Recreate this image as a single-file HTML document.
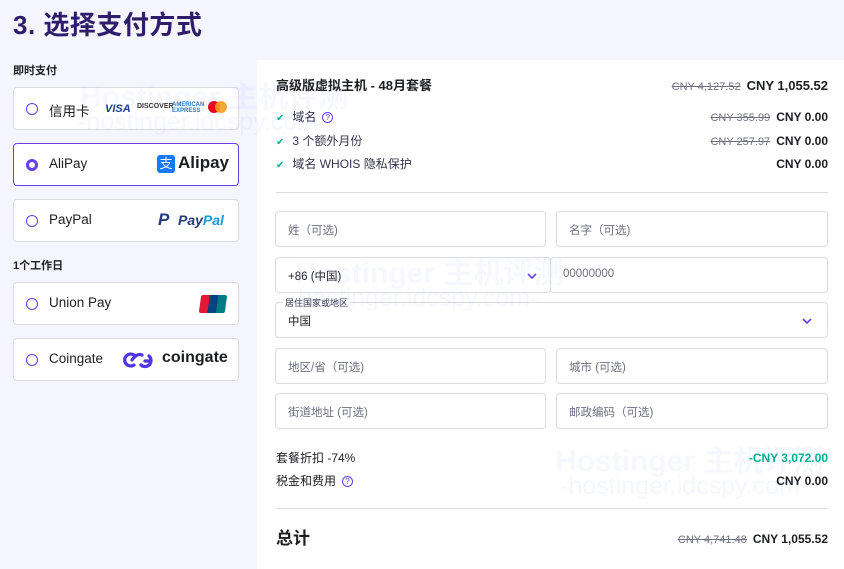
<!DOCTYPE html>
<html><head><meta charset="utf-8"><style>
*{margin:0;padding:0;box-sizing:border-box}
body{width:844px;height:569px;overflow:hidden;background:#f4f5ff;font-family:"Liberation Sans","Noto Sans CJK SC",sans-serif;color:#1d1e20;position:relative}
.a{position:absolute}
h1{position:absolute;left:13px;top:5px;font-size:26px;font-weight:bold;color:#2f1c6a;letter-spacing:0.5px}
.sec{position:absolute;left:13px;font-size:11px;font-weight:bold;color:#1d1e20}
.card{position:absolute;left:13px;width:226px;height:43px;background:#fff;border:1px solid #dadce0;border-radius:4px}
.card.sel{border-color:#673de6}
.rad{position:absolute;left:12px;top:15px;width:12px;height:12px;border:1.5px solid #673de6;border-radius:50%}
.sel .rad{border-width:3.5px}
.lbl{position:absolute;left:35px;top:12px;font-size:13.5px;color:#1d1e20}
.panel{position:absolute;left:257px;top:60px;width:587px;height:509px;background:#fff}
.r{position:absolute;right:16px;font-size:12px;font-weight:bold;text-align:right;line-height:16px}
.s{color:#6d7081;text-decoration:line-through;font-weight:normal;margin-right:6px;font-size:11px}
.row{position:absolute;left:19px;font-size:12px;color:#36344d;line-height:16px}
.ck{color:#00b090;font-size:10px;margin-right:8px}
.q{display:inline-block;width:11px;height:11px;border:1px solid #673de6;border-radius:50%;color:#673de6;font-size:8px;text-align:center;line-height:9px;margin-left:6px;vertical-align:1px}
.hr{position:absolute;left:19px;width:552px;height:1px;background:#dadce0}
.in{position:absolute;height:36px;border:1px solid #dadce0;border-radius:4px;font-size:11.5px;color:#6d7081;padding:10px 12px}
.wm{position:absolute;font-weight:bold;color:rgba(140,150,255,0.07);font-size:30px;white-space:nowrap}
.wm2{position:absolute;color:rgba(140,150,255,0.09);font-size:25px;white-space:nowrap}
.chev{position:absolute;width:12px;height:8px}
</style></head><body>
<h1>3. 选择支付方式</h1>
<div class="sec" style="top:62px">即时支付</div>
<div class="card" style="top:87px"><div class="rad"></div><div class="lbl">信用卡</div>
<span class="a" style="left:91px;top:15px;font-size:11px;font-weight:bold;font-style:italic;color:#1a3d8f">VISA</span>
<span class="a" style="left:123px;top:15px;font-size:7px;font-weight:bold;color:#333">DISCOVER</span>
<span class="a" style="left:158px;top:14px;font-size:6px;font-weight:bold;color:#2e77bb;line-height:6px">AMERICAN<br>EXPRESS</span>
<span class="a" style="left:194px;top:13px;width:12px;height:12px;border-radius:50%;background:#eb001b"></span>
<span class="a" style="left:201px;top:13px;width:12px;height:12px;border-radius:50%;background:#f79e1b;opacity:.9"></span></div>
<div class="card sel" style="top:143px"><div class="rad"></div><div class="lbl">AliPay</div>
<span class="a" style="left:143px;top:11px;width:18px;height:18px;background:#1677ff;border-radius:3px;color:#fff;font-size:13px;text-align:center;line-height:18px">支</span>
<span class="a" style="left:164px;top:9px;font-size:17px;font-weight:bold;color:#1d1e20">Alipay</span></div>
<div class="card" style="top:199px"><div class="rad"></div><div class="lbl">PayPal</div>
<span class="a" style="left:144px;top:10px;font-size:17px;font-weight:bold;font-style:italic;color:#253b80">P</span>
<span class="a" style="left:164px;top:12px;font-size:14px;font-weight:bold;font-style:italic;color:#253b80">Pay<span style="color:#179bd7">Pal</span></span></div>
<div class="sec" style="top:257px">1个工作日</div>
<div class="card" style="top:282px"><div class="rad"></div><div class="lbl">Union Pay</div>
<span class="a" style="left:186px;top:12px;width:26px;height:18px;background:linear-gradient(90deg,#e21836 0 33%,#00447c 33% 66%,#007b84 66%);transform:skewX(-8deg);border-radius:2px"></span></div>
<div class="card" style="top:338px"><div class="rad"></div><div class="lbl">Coingate</div>
<svg class="a" style="left:108px;top:12px" width="31" height="18" viewBox="0 0 31 18"><path d="M12 4 A6 6 0 1 0 12 14 M10 9 Q15 2 20 4 M19 14 A6 6 0 1 0 27 5 M23 10 H28" fill="none" stroke="#4f35e6" stroke-width="3.2" stroke-linecap="round"/></svg>
<span class="a" style="left:148px;top:10px;font-size:16px;font-weight:bold;color:#1d1e20">coingate</span></div>

<div class="panel">
<div class="row" style="top:18px;font-size:13px;font-weight:bold;color:#1d1e20">高级版虚拟主机 - 48月套餐</div>
<div class="r" style="top:18px;font-size:13px"><span class="s">CNY 4,127.52</span>CNY 1,055.52</div>
<div class="row" style="top:49px"><span class="ck">✔</span>域名<span class="q">?</span></div>
<div class="r" style="top:49px"><span class="s">CNY 355.99</span>CNY 0.00</div>
<div class="row" style="top:73px"><span class="ck">✔</span>3 个额外月份</div>
<div class="r" style="top:73px"><span class="s">CNY 257.97</span>CNY 0.00</div>
<div class="row" style="top:96px"><span class="ck">✔</span>域名 WHOIS 隐私保护</div>
<div class="r" style="top:96px">CNY 0.00</div>
<div class="hr" style="top:132px"></div>
<div class="in" style="left:18px;top:151px;width:271px">姓（可选)</div>
<div class="in" style="left:299px;top:151px;width:272px">名字（可选)</div>
<div class="in" style="left:18px;top:197px;width:276px;color:#1d1e20">+86 (中国)<svg class="chev" style="right:12px;top:14px" viewBox="0 0 12 8"><path d="M2 2 L6 6 L10 2" fill="none" stroke="#673de6" stroke-width="1.6"/></svg></div>
<div class="in" style="left:293px;top:197px;width:278px">00000000</div>
<div class="in" style="left:18px;top:242px;width:553px;color:#1d1e20;padding-top:10px">中国<svg class="chev" style="right:14px;top:14px" viewBox="0 0 12 8"><path d="M2 2 L6 6 L10 2" fill="none" stroke="#673de6" stroke-width="1.6"/></svg></div>
<div class="a" style="left:26px;top:236px;font-size:9px;color:#36344d;background:#fff;padding:0 2px">居住国家或地区</div>
<div class="in" style="left:18px;top:288px;width:271px">地区/省（可选)</div>
<div class="in" style="left:299px;top:288px;width:272px">城市 (可选)</div>
<div class="in" style="left:18px;top:333px;width:271px">街道地址 (可选)</div>
<div class="in" style="left:299px;top:333px;width:272px">邮政编码（可选)</div>
<div class="row" style="top:390px;color:#1d1e20">套餐折扣 -74%</div>
<div class="r" style="top:390px;color:#00b090;font-size:12px">-CNY 3,072.00</div>
<div class="row" style="top:413px;color:#1d1e20">税金和费用<span class="q">?</span></div>
<div class="r" style="top:413px">CNY 0.00</div>
<div class="hr" style="top:448px"></div>
<div class="row" style="top:468px;font-size:17px;font-weight:bold;color:#1d1e20;line-height:22px">总计</div>
<div class="r" style="top:471px"><span class="s">CNY 4,741.48</span>CNY 1,055.52</div>
</div>

<div class="wm" style="left:80px;top:72px">Hostinger 主机评测</div>
<div class="wm2" style="left:78px;top:108px">-hostinger.idcspy.com-</div>
<div class="wm" style="left:295px;top:248px">Hostinger 主机评测</div>
<div class="wm2" style="left:290px;top:284px">-hostinger.idcspy.com-</div>
<div class="wm" style="left:555px;top:436px">Hostinger 主机评测</div>
<div class="wm2" style="left:560px;top:472px">-hostinger.idcspy.com</div>
</body></html>
